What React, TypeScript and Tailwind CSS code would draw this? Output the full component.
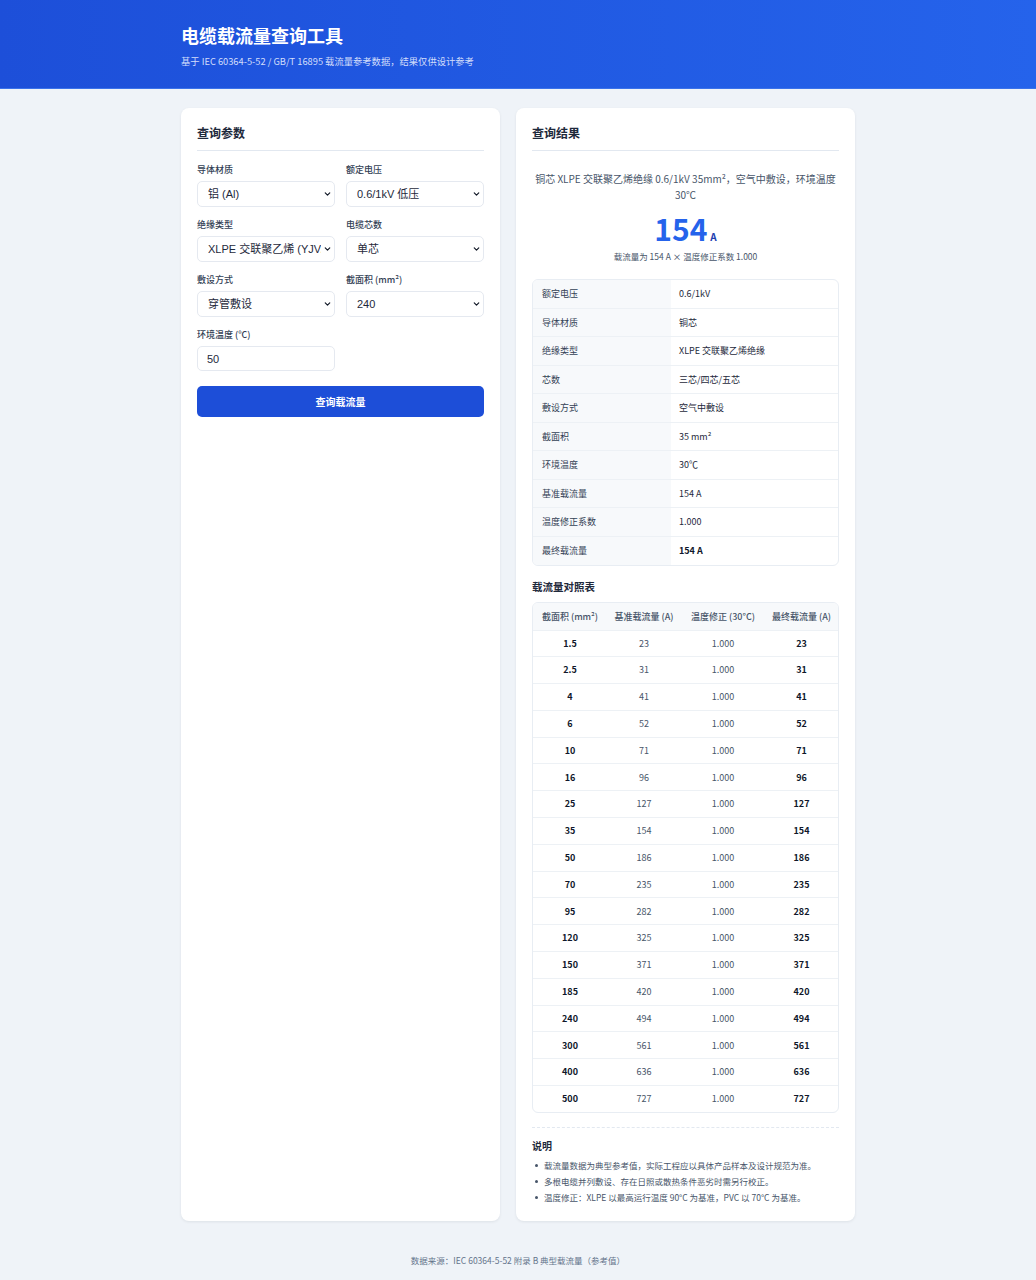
import { useState } from "react";
import { ChevronDown } from "lucide-react";

const rows: [string, number][] = [
  ["1.5", 23],
  ["2.5", 31],
  ["4", 41],
  ["6", 52],
  ["10", 71],
  ["16", 96],
  ["25", 127],
  ["35", 154],
  ["50", 186],
  ["70", 235],
  ["95", 282],
  ["120", 325],
  ["150", 371],
  ["185", 420],
  ["240", 494],
  ["300", 561],
  ["400", 636],
  ["500", 727],
];

const details: [string, React.ReactNode][] = [
  ["额定电压", "0.6/1kV"],
  ["导体材质", "铜芯"],
  ["绝缘类型", "XLPE 交联聚乙烯绝缘"],
  ["芯数", "三芯/四芯/五芯"],
  ["敷设方式", "空气中敷设"],
  ["截面积", "35 mm²"],
  ["环境温度", "30℃"],
  ["基准载流量", "154 A"],
  ["温度修正系数", "1.000"],
  ["最终载流量", <b className="font-bold text-[#0f172a]">154 A</b>],
];

const notes = [
  "载流量数据为典型参考值，实际工程应以具体产品样本及设计规范为准。",
  "多根电缆并列敷设、存在日照或散热条件恶劣时需另行校正。",
  "温度修正：XLPE 以最高运行温度 90°C 为基准，PVC 以 70°C 为基准。",
];

const ctrl =
  "block w-full rounded-[5px] border border-[#e5e9f0] bg-white text-[11px] text-[#1e293b] font-['Liberation_Sans','Noto_Sans_CJK_SC',sans-serif] outline-none";
const inputCls = ctrl + " h-[25px] pl-[9px]";

function Field({ label, children }: { label: string; children: React.ReactNode }) {
  return (
    <label className="flex flex-col">
      <span className="text-[9px] leading-[12px] font-medium text-[#334155] mb-[5px]">{label}</span>
      {children}
    </label>
  );
}

function Select({ value, options }: { value: string; options: [string, string][] }) {
  return (
    <div className="relative h-[26px]">
      <select className={ctrl + " h-[26px] appearance-none pl-[10px] pr-[13px]"} defaultValue={value}>
        {options.map(([v, t]) => (
          <option key={v} value={v}>
            {t}
          </option>
        ))}
      </select>
      <ChevronDown
        size={9}
        strokeWidth={3.2}
        className="absolute right-[3px] top-1/2 -translate-y-1/2 pointer-events-none text-[#111827]"
      />
    </div>
  );
}

export default function App() {
  const [temp, setTemp] = useState("50");

  return (
    <div className="min-h-screen bg-[#eff3f8] font-['Noto_Sans_CJK_SC','Noto_Sans',sans-serif] text-[#1e293b]">
      <header className="h-[89px] bg-gradient-to-r from-[#1d4fd9] to-[#2563eb] border-b border-[#3a72ea]">
        <div className="w-[674px] mx-auto pt-[23px]">
          <h1 className="text-[18px] leading-[24px] font-bold text-white">电缆载流量查询工具</h1>
          <p className="mt-[7px] text-[9.3px] leading-[14px] text-[#d3defb]">
            基于 IEC 60364-5-52 / GB/T 16895 载流量参考数据，结果仅供设计参考
          </p>
        </div>
      </header>

      <main className="w-[674px] mx-auto pt-[19px] grid grid-cols-[319px_339px] gap-4">
        {/* query form */}
        <section className="bg-white rounded-lg shadow-[0_1px_3px_rgba(15,23,42,0.08)] p-4">
          <h2 className="text-[12px] leading-[18px] font-bold pb-[8px] border-b border-[#e2e8f0]">查询参数</h2>
          <div className="mt-[13px] grid grid-cols-2 gap-x-[11px] gap-y-[12px]">
            <Field label="导体材质">
              <Select
                value="al"
                options={[
                  ["cu", "铜 (Cu)"],
                  ["al", "铝 (Al)"],
                ]}
              />
            </Field>
            <Field label="额定电压">
              <Select
                value="lv"
                options={[
                  ["lv", "0.6/1kV 低压"],
                  ["mv", "8.7/15kV 中压"],
                ]}
              />
            </Field>
            <Field label="绝缘类型">
              <Select
                value="xlpe"
                options={[
                  ["xlpe", "XLPE 交联聚乙烯 (YJV/YJLV)"],
                  ["pvc", "PVC 聚氯乙烯 (VV/VLV)"],
                ]}
              />
            </Field>
            <Field label="电缆芯数">
              <Select
                value="1"
                options={[
                  ["1", "单芯"],
                  ["3", "三芯/四芯/五芯"],
                ]}
              />
            </Field>
            <Field label="敷设方式">
              <Select
                value="pipe"
                options={[
                  ["air", "空气中敷设"],
                  ["pipe", "穿管敷设"],
                  ["ground", "直埋敷设"],
                ]}
              />
            </Field>
            <Field label="截面积 (mm²)">
              <Select value="240" options={rows.map(([s]) => [s, s] as [string, string])} />
            </Field>
            <Field label="环境温度 (℃)">
              <input className={inputCls} value={temp} onChange={(e) => setTemp(e.target.value)} />
            </Field>
          </div>
          <button className="mt-[15px] w-full h-[31px] rounded-[5px] bg-[#1d4ed8] text-white text-[10px] font-bold">
            查询载流量
          </button>
        </section>

        {/* result */}
        <section className="bg-white rounded-lg shadow-[0_1px_3px_rgba(15,23,42,0.08)] p-4">
          <h2 className="text-[12px] leading-[18px] font-bold pb-[8px] border-b border-[#e2e8f0]">查询结果</h2>

          <div className="text-center">
            <p className="mt-[20px] text-[10px] leading-[16px] text-[#475569]">
              铜芯 XLPE 交联聚乙烯绝缘 0.6/1kV 35mm²，空气中敷设，环境温度
              <br />
              30℃
            </p>
            <div className="mt-[10px] flex items-baseline justify-center leading-none">
              <span className="text-[30px] font-bold text-[#2563eb]">154</span>
              <span className="ml-[3px] text-[10px] font-bold text-[#1e40af]">A</span>
            </div>
            <p className="mt-[7px] text-[8.5px] leading-[12px] text-[#475569]">
              载流量为 154 A × 温度修正系数 1.000
            </p>
          </div>

          <div className="mt-[17px] border border-[#e8edf3] rounded-md overflow-hidden">
            {details.map(([k, v], i) => (
              <div
                key={k}
                className={
                  "grid grid-cols-[138px_1fr] h-[28.5px] text-[9px] " +
                  (i < details.length - 1 ? "border-b border-[#edf1f5]" : "")
                }
              >
                <div className="bg-[#f7f9fb] pl-[9px] flex items-center text-[#334155]">{k}</div>
                <div className="pl-[8px] flex items-center text-[#1e293b]">{v}</div>
              </div>
            ))}
          </div>

          <h3 className="mt-[14px] text-[10.5px] leading-[14px] font-bold">载流量对照表</h3>
          <div className="mt-[8px] border border-[#e8edf3] rounded-md overflow-hidden">
            <table className="w-full border-collapse text-[9px] text-center">
              <colgroup>
                <col className="w-[74px]" />
                <col className="w-[74px]" />
                <col className="w-[84px]" />
                <col />
              </colgroup>
              <thead>
                <tr className="h-[27px] bg-[#f7f9fb] text-[#475569]">
                  <th className="font-medium">截面积 (mm²)</th>
                  <th className="font-medium">基准载流量 (A)</th>
                  <th className="font-medium">温度修正 (30°C)</th>
                  <th className="font-medium">最终载流量 (A)</th>
                </tr>
              </thead>
              <tbody>
                {rows.map(([s, a]) => (
                  <tr key={s} className="h-[26.8px] border-t border-[#edf1f5]">
                    <td className="font-bold text-[#0f172a]">{s}</td>
                    <td className="text-[#475569]">{a}</td>
                    <td className="text-[#475569]">1.000</td>
                    <td className="font-bold text-[#0f172a]">{a}</td>
                  </tr>
                ))}
              </tbody>
            </table>
          </div>

          <div className="mt-[14px] border-t border-dashed border-[#e2e8f0]">
            <h3 className="mt-[11px] text-[10px] leading-[14px] font-bold">说明</h3>
            <ul className="mt-[4px] text-[8.5px] leading-[16px] text-[#475569]">
              {notes.map((t) => (
                <li key={t} className="flex items-center">
                  <span className="ml-[3px] mr-[6px] w-[3px] h-[3px] rounded-full bg-[#475569]" />
                  <span>{t}</span>
                </li>
              ))}
            </ul>
          </div>
        </section>
      </main>

      <footer className="mt-[32px] pb-[13px] text-center text-[8.5px] leading-[14px] text-[#64748b]">
        数据来源：IEC 60364-5-52 附录 B 典型载流量（参考值）
      </footer>
    </div>
  );
}
